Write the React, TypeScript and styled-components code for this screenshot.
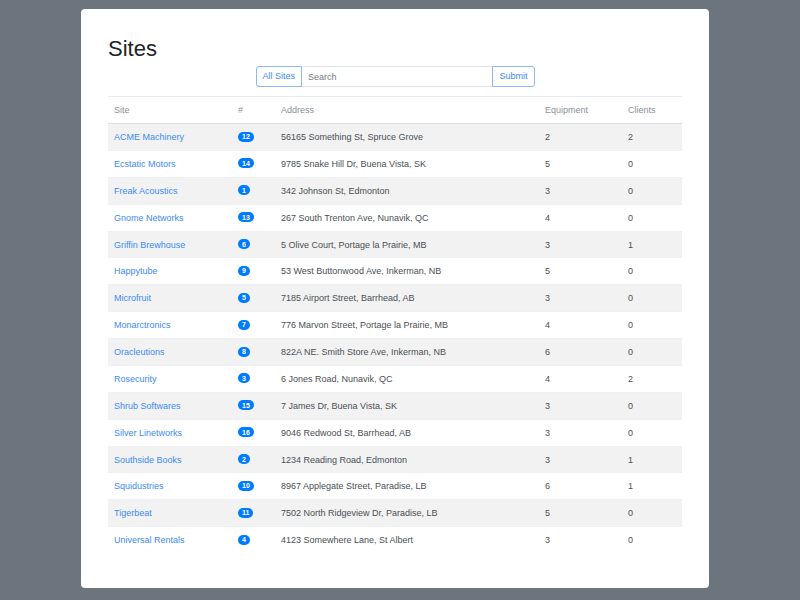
import React from "react";
import styled, { createGlobalStyle } from "styled-components";

const Global = createGlobalStyle`
  html, body { margin: 0; padding: 0; background: #6c757d; }
  body { font-family: "Liberation Sans", Arial, sans-serif; color: #212529; }
  * { box-sizing: border-box; }
`;

const Page = styled.div`
  width: 800px;
  height: 600px;
  padding: 9px 0 0 81px;
  overflow: hidden;
`;

const Card = styled.div`
  width: 628px;
  height: 579px;
  background: #fff;
  border-radius: 4px;
  padding: 26px 27px;
`;

const Title = styled.h1`
  margin: 0 0 4px;
  font-size: 22px;
  line-height: 27px;
  font-weight: 400;
  color: #212529;
`;

const SearchBar = styled.form`
  display: flex;
  width: 279px;
  height: 21px;
  margin: 0 auto 9px;
`;

const OutlineButton = styled.button<{ $side: "left" | "right" }>`
  font-family: inherit;
  font-size: 9px;
  line-height: 13px;
  padding: 3px 6px;
  color: #3b8af7;
  background: #fff;
  border: 1px solid #8db8f5;
  border-radius: ${(p) => (p.$side === "left" ? "3px 0 0 3px" : "0 3px 3px 0")};
  cursor: pointer;
`;

const SearchInput = styled.input`
  flex: 1;
  min-width: 0;
  font-family: inherit;
  font-size: 9px;
  padding: 3px 6px;
  border: 1px solid #dfe3e7;
  border-left: none;
  border-right: none;
  color: #495057;
  outline: none;
  &::placeholder { color: #737b82; }
`;

const Table = styled.table`
  width: 574px;
  border-collapse: collapse;
  table-layout: fixed;
  font-size: 9px;
`;

const Th = styled.th<{ $w: number }>`
  width: ${(p) => p.$w}px;
  text-align: left;
  font-weight: 400;
  color: #8c9196;
  padding: 6px 6px;
  line-height: 14px;
  border-top: 1px solid #e8ebee;
  border-bottom: 1px solid #dadee2;
`;

const Row = styled.tr<{ $striped: boolean }>`
  background: ${(p) => (p.$striped ? "#f2f2f2" : "transparent")};
`;

const Td = styled.td`
  padding: 7px 6px 5px;
  line-height: 13.87px;
  border-top: 1px solid #eef0f2;
  color: #4a4f54;
  white-space: nowrap;
`;

const SiteLink = styled.a`
  color: #3b8af7;
  text-decoration: none;
`;

const Badge = styled.span`
  display: inline-block;
  background: #007bff;
  color: #fff;
  font-weight: 700;
  font-size: 7px;
  line-height: 1;
  padding: 1.5px 4px;
  border-radius: 8px;
  vertical-align: 1px;
  text-align: center;
  min-width: 11px;
`;

type Site = { name: string; n: number; address: string; equipment: number; clients: number };

const sites: Site[] = [
  { name: "ACME Machinery", n: 12, address: "56165 Something St, Spruce Grove", equipment: 2, clients: 2 },
  { name: "Ecstatic Motors", n: 14, address: "9785 Snake Hill Dr, Buena Vista, SK", equipment: 5, clients: 0 },
  { name: "Freak Acoustics", n: 1, address: "342 Johnson St, Edmonton", equipment: 3, clients: 0 },
  { name: "Gnome Networks", n: 13, address: "267 South Trenton Ave, Nunavik, QC", equipment: 4, clients: 0 },
  { name: "Griffin Brewhouse", n: 6, address: "5 Olive Court, Portage la Prairie, MB", equipment: 3, clients: 1 },
  { name: "Happytube", n: 9, address: "53 West Buttonwood Ave, Inkerman, NB", equipment: 5, clients: 0 },
  { name: "Microfruit", n: 5, address: "7185 Airport Street, Barrhead, AB", equipment: 3, clients: 0 },
  { name: "Monarctronics", n: 7, address: "776 Marvon Street, Portage la Prairie, MB", equipment: 4, clients: 0 },
  { name: "Oracleutions", n: 8, address: "822A NE. Smith Store Ave, Inkerman, NB", equipment: 6, clients: 0 },
  { name: "Rosecurity", n: 3, address: "6 Jones Road, Nunavik, QC", equipment: 4, clients: 2 },
  { name: "Shrub Softwares", n: 15, address: "7 James Dr, Buena Vista, SK", equipment: 3, clients: 0 },
  { name: "Silver Linetworks", n: 16, address: "9046 Redwood St, Barrhead, AB", equipment: 3, clients: 0 },
  { name: "Southside Books", n: 2, address: "1234 Reading Road, Edmonton", equipment: 3, clients: 1 },
  { name: "Squidustries", n: 10, address: "8967 Applegate Street, Paradise, LB", equipment: 6, clients: 1 },
  { name: "Tigerbeat", n: 11, address: "7502 North Ridgeview Dr, Paradise, LB", equipment: 5, clients: 0 },
  { name: "Universal Rentals", n: 4, address: "4123 Somewhere Lane, St Albert", equipment: 3, clients: 0 },
];

export default function App() {
  return (
    <>
      <Global />
      <Page>
        <Card>
          <Title>Sites</Title>
          <SearchBar onSubmit={(e) => e.preventDefault()}>
            <OutlineButton type="button" $side="left">All Sites</OutlineButton>
            <SearchInput placeholder="Search" />
            <OutlineButton type="submit" $side="right">Submit</OutlineButton>
          </SearchBar>
          <Table>
            <thead>
              <tr>
                <Th $w={124}>Site</Th>
                <Th $w={43}>#</Th>
                <Th $w={264}>Address</Th>
                <Th $w={83}>Equipment</Th>
                <Th $w={60}>Clients</Th>
              </tr>
            </thead>
            <tbody>
              {sites.map((s, i) => (
                <Row key={s.name} $striped={i % 2 === 0}>
                  <Td><SiteLink href="#">{s.name}</SiteLink></Td>
                  <Td><Badge>{s.n}</Badge></Td>
                  <Td>{s.address}</Td>
                  <Td>{s.equipment}</Td>
                  <Td>{s.clients}</Td>
                </Row>
              ))}
            </tbody>
          </Table>
        </Card>
      </Page>
    </>
  );
}
